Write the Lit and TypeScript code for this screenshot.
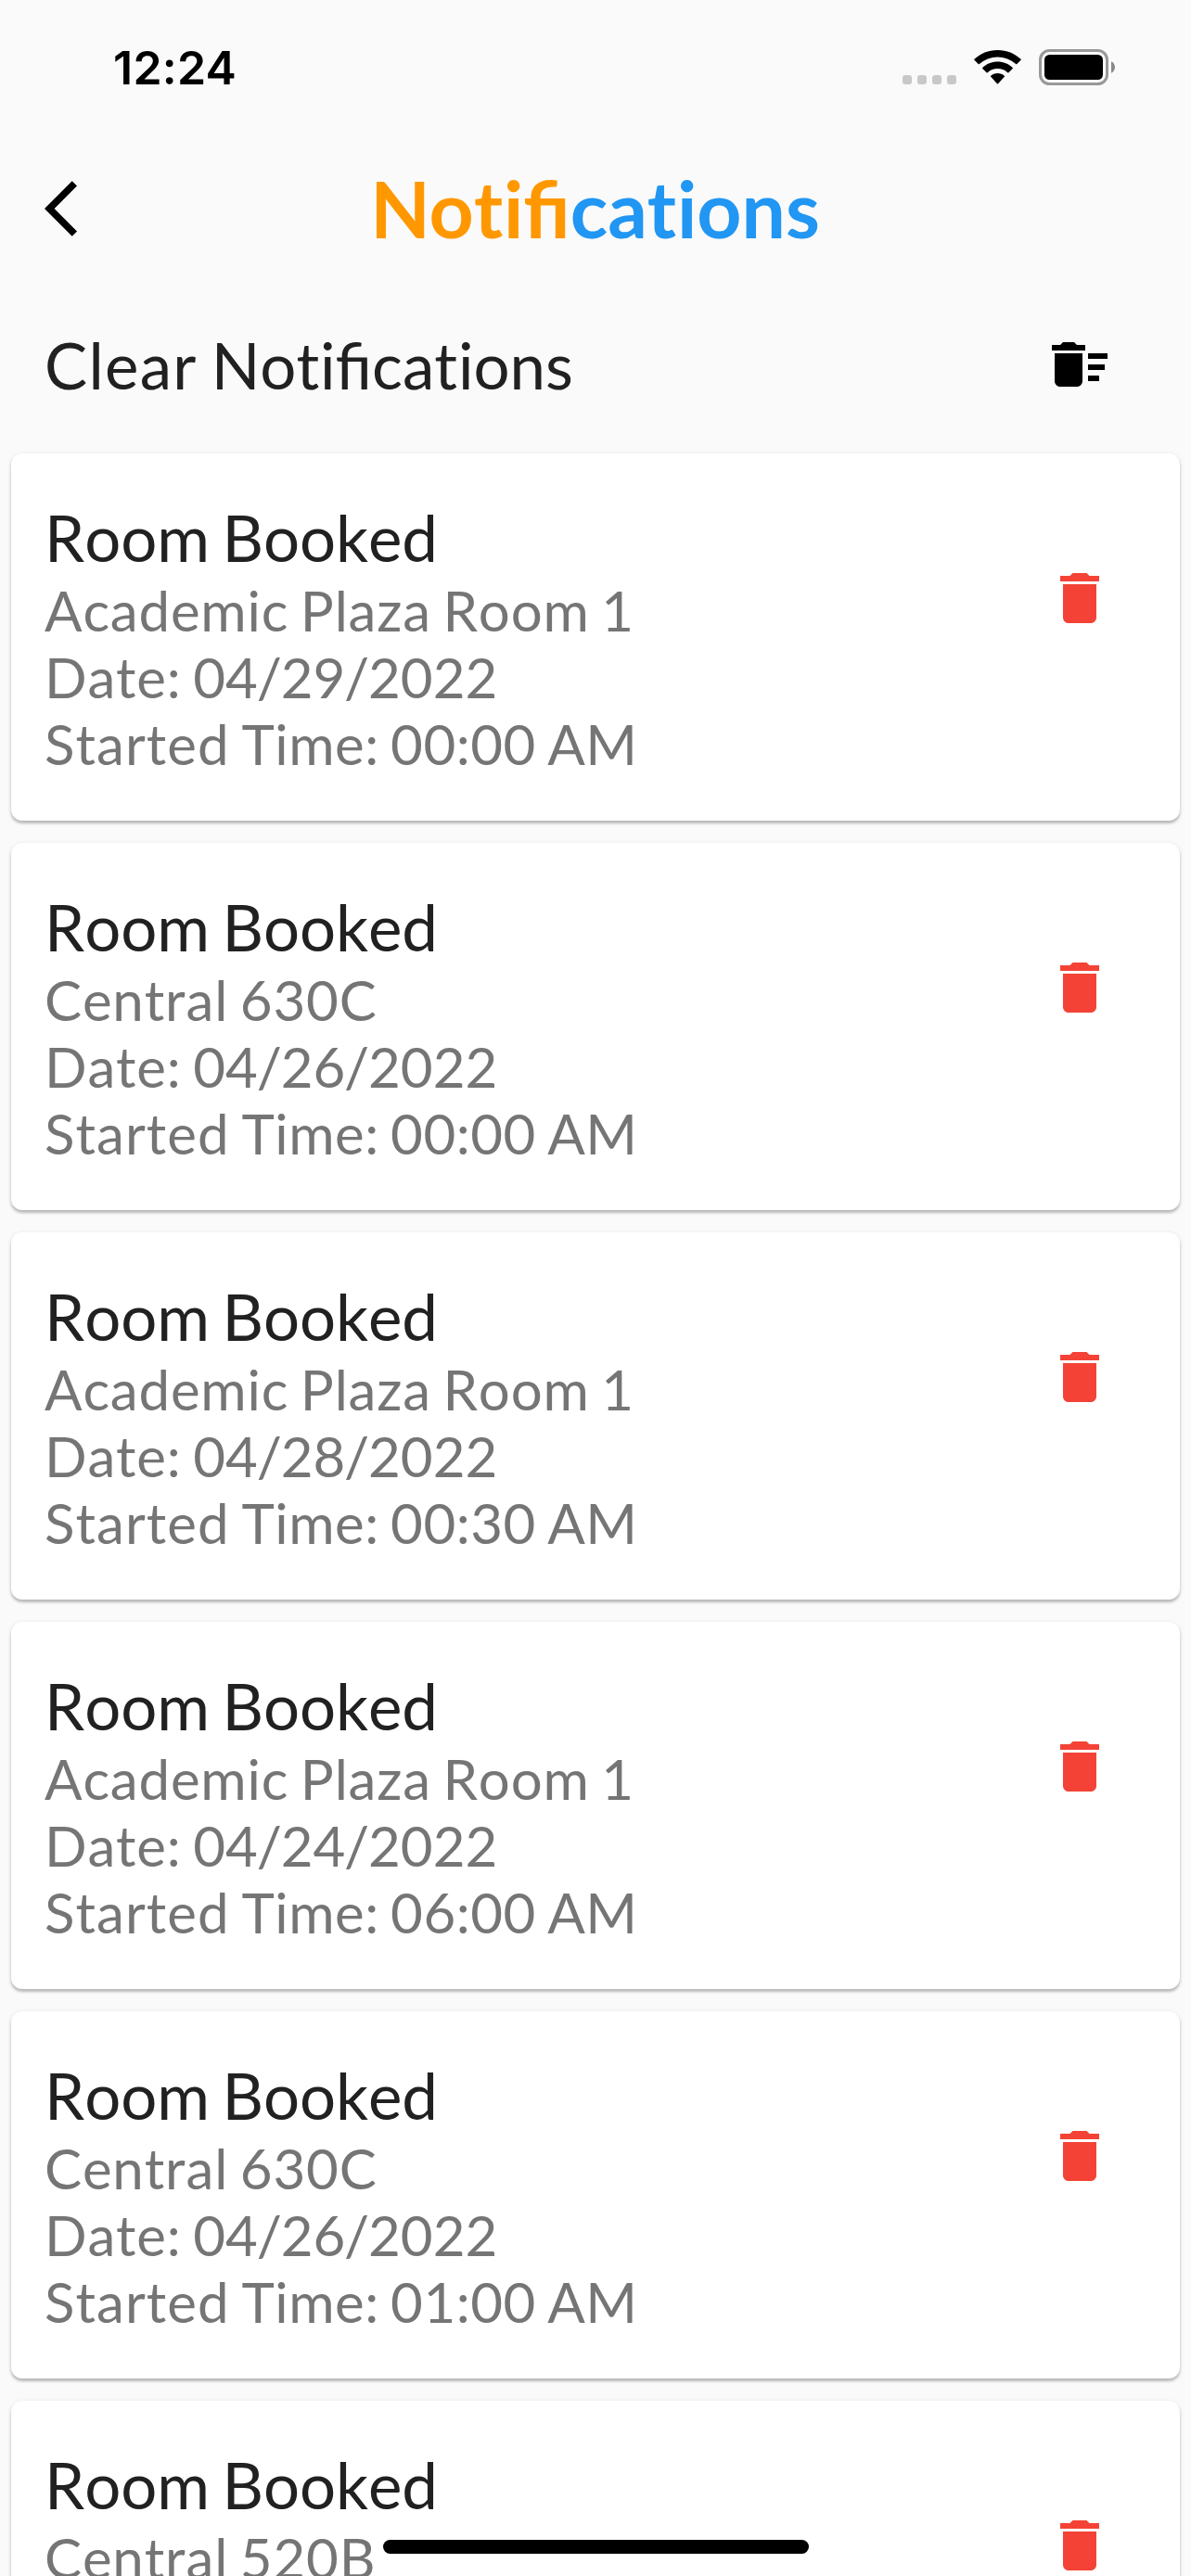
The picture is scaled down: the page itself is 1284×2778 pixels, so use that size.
import { LitElement, html, css } from "lit";
import { customElement, property } from "lit/decorators.js";

interface Booking {
  room: string;
  date: string;
  time: string;
}

const BOOKINGS: Booking[] = [
  { room: "Academic Plaza Room 1", date: "04/29/2022", time: "00:00 AM" },
  { room: "Central 630C", date: "04/26/2022", time: "00:00 AM" },
  { room: "Academic Plaza Room 1", date: "04/28/2022", time: "00:30 AM" },
  { room: "Academic Plaza Room 1", date: "04/24/2022", time: "06:00 AM" },
  { room: "Central 630C", date: "04/26/2022", time: "01:00 AM" },
  { room: "Central 520B", date: "04/26/2022", time: "01:00 AM" },
];

@customElement("status-bar")
export class StatusBar extends LitElement {
  static styles = css`
    :host {
      display: flex;
      justify-content: space-between;
      box-sizing: border-box;
      height: 141px;
      padding: 43px 82px 0 122px;
      color: #000;
    }
    .time {
      font: 600 50px/60px Inter, "Liberation Sans", sans-serif;
      letter-spacing: 0.25px;
    }
    .indicators {
      display: flex;
      align-items: flex-start;
      padding-top: 10px;
    }
    .dots {
      display: flex;
      gap: 6px;
      margin: 28px 19px 0 0;
    }
    .dot {
      width: 10px;
      height: 10px;
      border-radius: 3px;
      background: #c8c8c8;
    }
    .wifi {
      margin: 1px 19px 0 0;
    }
    svg {
      display: block;
    }
  `;

  render() {
    return html`
      <div class="time">12:24</div>
      <div class="indicators">
        <div class="dots">
          <div class="dot"></div>
          <div class="dot"></div>
          <div class="dot"></div>
          <div class="dot"></div>
        </div>
        <svg class="wifi" width="51" height="37" viewBox="0 0 51 37">
          <path d="M25.5 0C35.200 0 44 3.700 50.600 9.800Q51 10.300 50.600 10.800L46.300 15.100Q45.700 15.600 45.200 15.100A29 29 0 0 0 5.800 15.100Q5.300 15.600 4.700 15.100L.4 10.800Q0 10.300.4 9.800C7 3.700 15.800 0 25.500 0Z"/>
          <path d="M25.500 12.500C31.700 12.500 37.400 14.900 41.700 18.900Q42.200 19.400 41.700 19.900L37.400 24.200Q36.900 24.700 36.300 24.200A16.300 16.300 0 0 0 14.700 24.200Q14.100 24.700 13.600 24.200L9.300 19.900Q8.800 19.400 9.300 18.900C13.600 14.900 19.300 12.500 25.500 12.500Z"/>
          <path d="M25.500 25C28.300 25 30.900 26 32.800 27.700Q33.300 28.200 32.800 28.800L26 36.300Q25.500 36.900 25 36.300L18.200 28.800Q17.700 28.200 18.200 27.700C20.100 26 22.700 25 25.500 25Z"/>
        </svg>
        <svg width="82" height="39" viewBox="0 0 82 39">
          <rect x="1.500" y="1.500" width="72" height="36" rx="10" fill="none" stroke="#999" stroke-width="3"/>
          <rect x="6" y="6" width="63" height="27" rx="5.500"/>
          <path d="M78 13.200C80.400 14.200 82 16.700 82 19.500S80.400 24.800 78 25.800Z" fill="#888"/>
        </svg>
      </div>
    `;
  }
}

@customElement("booking-card")
export class BookingCard extends LitElement {
  @property({ attribute: false }) booking!: Booking;

  static styles = css`
    :host {
      display: flex;
      justify-content: space-between;
      align-items: flex-start;
      box-sizing: border-box;
      flex: none;
      height: 396px;
      padding: 49px 72px 0 36px;
      border-radius: 12px;
      background: #fff;
      box-shadow: 0 3px 3px rgba(0, 0, 0, 0.22), 0 1px 5px rgba(0, 0, 0, 0.1);
      font-kerning: none;
      white-space: nowrap;
    }
    .title {
      font-size: 69px;
      line-height: 84px;
      color: #212121;
      letter-spacing: -0.1px;
      word-spacing: -4px;
    }
    .line {
      font-size: 60px;
      line-height: 72px;
      color: #757575;
      letter-spacing: 0.8px;
      word-spacing: -3.5px;
    }
    .wide {
      letter-spacing: 1px;
    }
    .tight {
      letter-spacing: 0.5px;
    }
    .date {
      letter-spacing: 0;
    }
    .slash {
      margin: 0 -1.2px;
    }
    .delete {
      display: block;
      margin-top: 71px;
    }
  `;

  render() {
    const { room, date, time } = this.booking;
    const dateParts = date
      .split("/")
      .map((part, i) => (i ? html`<span class="slash">/</span>${part}` : part));
    return html`
      <div>
        <div class="title">Room Booked</div>
        <div class="line">${room}</div>
        <div class="line">Date: <span class="date">${dateParts}</span></div>
        <div class="line"><span class="wide">Started </span><span class="tight">Time: ${time}</span></div>
      </div>
      <svg class="delete" width="72" height="72" viewBox="0 0 24 24" fill="#f44336">
        <path d="M6 19c0 1.100.9 2 2 2h8c1.100 0 2-.9 2-2V7H6v12zM19 4h-3.500l-1-1h-5l-1 1H5v2h14V4z"/>
      </svg>
    `;
  }
}

@customElement("app-root")
export class AppRoot extends LitElement {
  static styles = css`
    :host {
      display: block;
      position: relative;
      width: 1284px;
      height: 2778px;
      overflow: hidden;
      background: #fafafa;
      font-family: Lato, "Liberation Sans", sans-serif;
    }
    .app-bar {
      display: grid;
      grid-template-columns: 72px 1fr 72px;
      align-items: center;
      height: 168px;
      padding: 0 48px;
    }
    h1 {
      margin: 0;
      padding: 0 1px 1px 0;
      text-align: center;
      font-size: 84px;
      line-height: 100px;
      font-weight: 700;
    }
    .orange {
      color: #ff9800;
    }
    .blue {
      color: #2196f3;
    }
    /* Keeps the t and i apart while the fi ligature stays. */
    .t {
      font-variant-ligatures: none;
      letter-spacing: 0.8px;
    }
    .clear {
      display: flex;
      justify-content: space-between;
      align-items: center;
      height: 168px;
      padding: 0 84px 0 48px;
      font-size: 69px;
      line-height: 84px;
      color: #212121;
      font-kerning: none;
      word-spacing: -4px;
    }
    .label {
      padding-top: 2px;
    }
    .wide {
      letter-spacing: 1.3px;
    }
    .list {
      display: flex;
      flex-direction: column;
      gap: 24px;
      padding: 12px;
    }
    .home {
      position: absolute;
      left: 413px;
      bottom: 24px;
      width: 459px;
      height: 15px;
      border-radius: 8px;
      background: #000;
    }
    svg {
      display: block;
    }
  `;

  render() {
    const t = html`<span class="t">t</span>`;
    return html`
      <status-bar></status-bar>
      <div class="app-bar">
        <svg width="72" height="72" viewBox="0 0 24 24">
          <path d="M11.670 3.870L9.900 2.100 0 12l9.900 9.900 1.770-1.770L3.540 12z"/>
        </svg>
        <h1><span class="orange">No${t}ifi</span><span class="blue">ca${t}ions</span></h1>
      </div>
      <div class="clear">
        <div class="label"><span class="wide">Clear </span>No${t}ifica${t}ions</div>
        <svg width="72" height="72" viewBox="0 0 24 24">
          <path d="M15 16h4v2h-4zm0-8h7v2h-7zm0 4h6v2h-6zM3 18c0 1.100.9 2 2 2h6c1.100 0 2-.9 2-2V8H3v10zM14 5h-3l-1-1H6L5 5H2v2h12z"/>
        </svg>
      </div>
      <div class="list">
        ${BOOKINGS.map((b) => html`<booking-card .booking=${b}></booking-card>`)}
      </div>
      <div class="home"></div>
    `;
  }
}
